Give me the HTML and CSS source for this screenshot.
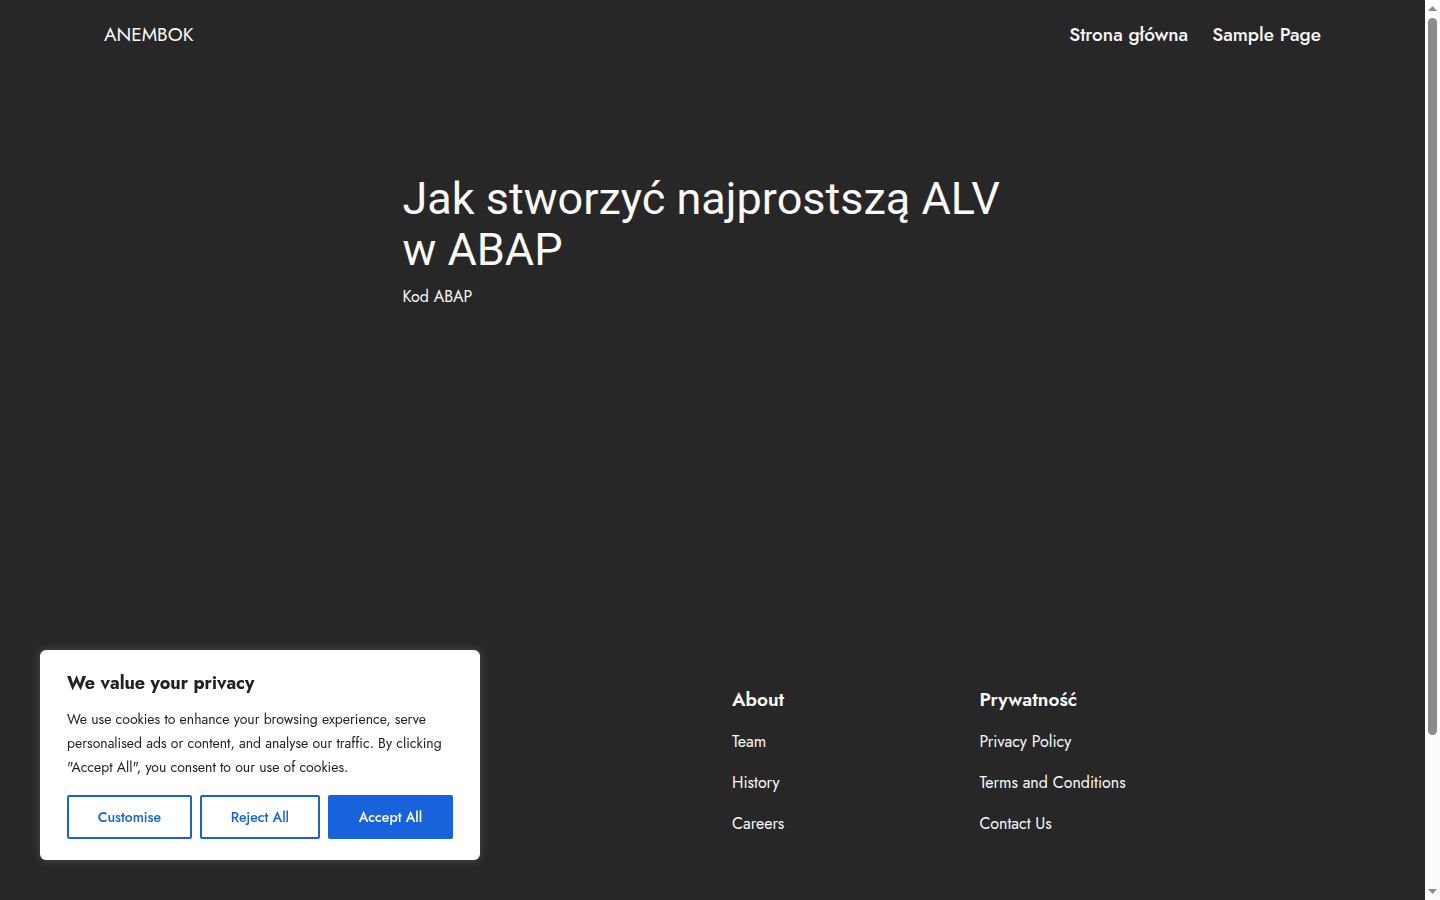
FILE: index.html
```html
<!DOCTYPE html>
<html lang="pl">
<head>
  <meta charset="UTF-8">
  <meta name="viewport" content="width=device-width, initial-scale=1.0">
  <title>Jak stworzyć najprostszą ALV w ABAP</title>
  <link rel="stylesheet" href="styles.css">
</head>
<body>
  <div class="page">
    <header class="site-header">
      <a href="#" class="site-title">ANEMBOK</a>
      <nav class="site-nav">
        <a href="#">Strona główna</a>
        <a href="#">Sample Page</a>
      </nav>
    </header>

    <main class="content">
      <h1>Jak stworzyć najprostszą ALV w ABAP</h1>
      <p>Kod ABAP</p>
    </main>

    <footer class="site-footer">
      <div class="footer-columns">
        <section>
          <h2>About</h2>
          <ul>
            <li><a href="#">Team</a></li>
            <li><a href="#">History</a></li>
            <li><a href="#">Careers</a></li>
          </ul>
        </section>
        <section>
          <h2>Prywatność</h2>
          <ul>
            <li><a href="#">Privacy Policy</a></li>
            <li><a href="#">Terms and Conditions</a></li>
            <li><a href="#">Contact Us</a></li>
          </ul>
        </section>
      </div>
    </footer>
  </div>

  <!-- Scrollbar -->
  <div class="scrollbar" aria-hidden="true">
    <svg width="9" height="5" viewBox="0 0 9 5"><path d="M0 5 4.500 0 9 5z"/></svg>
    <div class="scroll-track"><div class="scroll-thumb"></div></div>
    <svg width="9" height="5" viewBox="0 0 9 5"><path d="M0 0h9L4.500 5z"/></svg>
  </div>

  <!-- Cookie banner -->
  <div class="cookie-banner" role="dialog" aria-labelledby="cookie-title">
    <h2 id="cookie-title">We value your privacy</h2>
    <p>We use cookies to enhance your browsing experience, serve personalised ads or content, and analyse our traffic. By clicking "Accept All", you consent to our use of cookies.</p>
    <div class="cookie-buttons">
      <button type="button" class="btn">Customise</button>
      <button type="button" class="btn">Reject All</button>
      <button type="button" class="btn btn-accept">Accept All</button>
    </div>
  </div>
</body>
</html>
```

FILE: styles.css
```css
* {
  box-sizing: border-box;
}

body {
  margin: 0;
  display: flex;
  background-color: #272727;
  color: #f9f9f9;
  font-family: Jost, Lato, sans-serif;
  font-size: 16px;
  line-height: 24px;
}

a {
  color: inherit;
  text-decoration: none;
}

a:hover {
  text-decoration: underline;
}

h1,
h2,
p,
ul {
  margin: 0;
  padding: 0;
}

.page {
  flex: 1;
  min-height: 100vh;
  display: flex;
  flex-direction: column;
}

.site-header {
  display: flex;
  justify-content: space-between;
  align-items: center;
  padding: 20px 104px;
  font-size: 19px;
  line-height: 29px;
}

.site-nav {
  display: flex;
  gap: 24px;
  font-weight: 500;
}

.content {
  flex: 1;
  width: 100%;
  max-width: 620px;
  margin: 0 auto;
  padding-top: 104px;
}

.content h1 {
  font-family: Roboto, sans-serif;
  font-size: 45px;
  font-weight: 400;
  line-height: 51px;
  margin-bottom: 10px;
}

.site-footer {
  display: flex;
  justify-content: flex-end;
  padding: 0 104px 64px;
}

.footer-columns {
  width: 589px;
  display: grid;
  grid-template-columns: 42% 1fr;
}

.footer-columns h2 {
  font-size: 19px;
  font-weight: 600;
  line-height: 28px;
  margin-bottom: 16px;
}

.footer-columns ul {
  display: flex;
  flex-direction: column;
  gap: 17px;
  list-style: none;
}

/* Scrollbar */
.scrollbar {
  width: 15px;
  height: 100vh;
  position: sticky;
  top: 0;
  display: flex;
  flex-direction: column;
  align-items: center;
  gap: 7px;
  padding: 6px 0;
  background-color: #fcfcfc;
  fill: #8b8b8b;
}

.scroll-track {
  flex: 1;
}

.scroll-thumb {
  width: 9px;
  height: 83%;
  border-radius: 5px;
  background-color: #8b8b8b;
}

/* Cookie banner */
.cookie-banner {
  position: fixed;
  left: 40px;
  bottom: 40px;
  width: 440px;
  padding: 20px 27px 21px;
  border-radius: 6px;
  background-color: #fff;
  color: #212121;
  box-shadow: 0 0 10px #acabab4d;
}

.cookie-banner h2 {
  font-size: 18px;
  line-height: 26px;
  margin-bottom: 11px;
}

.cookie-banner p {
  font-size: 14px;
  margin-bottom: 16px;
}

.cookie-buttons {
  display: flex;
  gap: 8px;
}

.btn {
  flex: 1 1 auto;
  padding: 8px 27px;
  border: 2px solid #1863dc;
  border-radius: 2px;
  background-color: transparent;
  color: #1863dc;
  font-family: inherit;
  font-size: 14px;
  font-weight: 500;
  line-height: 24px;
  white-space: nowrap;
  cursor: pointer;
}

.btn-accept {
  background-color: #1863dc;
  color: #fff;
}
```
